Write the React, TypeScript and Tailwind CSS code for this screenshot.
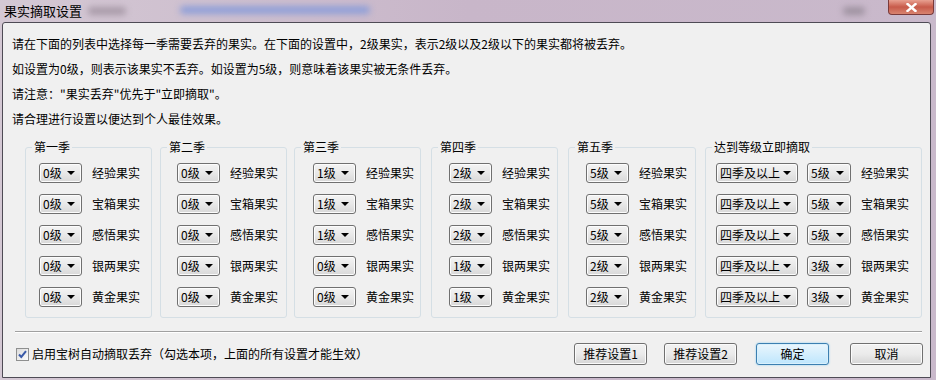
const labels = ['经验果实', '宝箱果实', '感悟果实', '银两果实', '黄金果实'];

const seasons = [
    { title: '第一季', box: 'ml-[22px] w-[127px]', pad: 'pl-[13px]', levels: ['0', '0', '0', '0', '0'] },
    { title: '第二季', box: 'ml-[8px] w-[127px]', pad: 'pl-[16px]', levels: ['0', '0', '0', '0', '0'] },
    { title: '第三季', box: 'ml-[7px] w-[127px]', pad: 'pl-[18px]', levels: ['1', '1', '1', '0', '0'] },
    { title: '第四季', box: 'ml-[10px] w-[127px]', pad: 'pl-[17px]', levels: ['2', '2', '2', '1', '1'] },
    { title: '第五季', box: 'ml-[10px] w-[128px]', pad: 'pl-[17px]', levels: ['5', '5', '5', '2', '2'] },
];

const pickLevels = ['5', '5', '5', '3', '3'];

const font = "font-['SimSun','Noto_Sans_CJK_SC',sans-serif]";

function Arrow() {
    return (
        <svg width="8" height="4" viewBox="0 0 8 4" className="shrink-0">
            <path d="M0 0h8L4 4z" fill="#000" />
        </svg>
    );
}

function Combo({ value, width }: { value: string; width: string }) {
    return (
        <div
            className={`${width} h-[20px] flex items-center justify-between pl-[3px] pr-[6px] border border-[#707070] rounded-[3px] bg-gradient-to-b from-[#f4f4f4] via-[#e8e8e8] to-[#d8d8d8] shadow-[inset_0_0_0_1px_#fcfcfc] text-[12px] leading-none text-black`}
        >
            <span>{value}</span>
            <Arrow />
        </div>
    );
}

function Group({ title, box, pad, children }: { title: string; box: string; pad: string; children: React.ReactNode }) {
    return (
        <fieldset className={`${box} h-[178px] border border-[#d5dfe5] rounded-[3px] pt-[9px]`}>
            <legend className="ml-[6px] px-[2px] text-[12px] leading-[14px]">{title}</legend>
            <div className={`${pad} flex flex-col gap-[11px]`}>{children}</div>
        </fieldset>
    );
}

function Button({ label, primary }: { label: string; primary?: boolean }) {
    return (
        <button
            className={`h-[22px] w-[73px] rounded-[3px] border text-[12px] leading-none text-black ${primary
                ? 'border-[#3c7fb1] bg-gradient-to-b from-[#eaf6fd] to-[#bee6fd] shadow-[inset_0_0_0_1px_#d9f0fc,0_0_2px_#7fc8ef]'
                : 'border-[#707070] bg-gradient-to-b from-[#f2f2f2] via-[#ebebeb] to-[#d5d5d5] shadow-[inset_0_0_0_1px_#fbfbfb]'
                }`}
        >
            {label}
        </button>
    );
}

export default function App() {
    return (
        <div className={`w-[936px] h-[380px] overflow-hidden flex flex-col bg-gradient-to-r from-[#d4c8d4] via-[#c8b6c9] to-[#c9b9cb] text-black ${font}`}>
            {/* title bar */}
            <div className="relative h-[22px] shrink-0 flex items-center pl-[4px] text-[13px]">
                <span>果实摘取设置</span>
                <div className="absolute left-[88px] top-[7px] w-[38px] h-[8px] rounded-full bg-[#a89aa8] blur-[3px]" />
                <div className="absolute left-[180px] top-[6px] w-[190px] h-[8px] rounded-full bg-[#8f9fd8] blur-[3px]" />
                <div className="absolute left-[843px] top-[7px] w-[22px] h-[8px] rounded-full bg-[#9d919f] blur-[3px]" />
                <div className="absolute right-[2px] top-0 w-[46px] h-[15px] rounded-b-[4px] border border-t-0 border-[#7a3a3a] bg-gradient-to-b from-[#e8a091] via-[#c75a4a] to-[#d8836f] flex items-center justify-center">
                    <svg width="11" height="9" viewBox="0 0 11 9">
                        <path d="M1.5 1l8 7M9.5 1l-8 7" stroke="#fff" strokeWidth="2.4" strokeLinecap="square" />
                    </svg>
                </div>
            </div>

            {/* dialog body */}
            <div className="ml-[2px] w-[929px] h-[356px] border border-[#4e4b55] rounded-t-[3px] bg-[#f0f0f0] flex flex-col text-[12px]">
                <div className="pl-[9px] pt-[8px] leading-[25px]">
                    <p>请在下面的列表中选择每一季需要丢弃的果实。在下面的设置中，2级果实，表示2级以及2级以下的果实都将被丢弃。</p>
                    <p>如设置为0级，则表示该果实不丢弃。如设置为5级，则意味着该果实被无条件丢弃。</p>
                    <p>请注意："果实丢弃"优先于"立即摘取"。</p>
                    <p>请合理进行设置以便达到个人最佳效果。</p>
                </div>

                <div className="flex mt-[9px]">
                    {seasons.map((s) => (
                        <Group key={s.title} title={s.title} box={s.box} pad={s.pad}>
                            {labels.map((l, i) => (
                                <div key={l} className="flex items-center gap-[10px]">
                                    <Combo value={`${s.levels[i]}级`} width="w-[43px]" />
                                    <span className="leading-[20px]">{l}</span>
                                </div>
                            ))}
                        </Group>
                    ))}
                    <Group title="达到等级立即摘取" box="ml-[9px] w-[217px]" pad="pl-[10px]">
                        {labels.map((l, i) => (
                            <div key={l} className="flex items-center">
                                <Combo value="四季及以上" width="w-[82px]" />
                                <div className="ml-[9px]">
                                    <Combo value={`${pickLevels[i]}级`} width="w-[44px]" />
                                </div>
                                <span className="ml-[10px] leading-[20px]">{l}</span>
                            </div>
                        ))}
                    </Group>
                </div>

                <div className="ml-[12px] mr-[8px] mt-[13px] h-[2px] border-t border-[#a0a0a0] border-b border-b-white" />

                <div className="flex items-center mt-[10px] pl-[13px] pr-[7px]">
                    <div className="w-[13px] h-[13px] border border-[#8e8f8f] bg-gradient-to-br from-[#dcdcdc] to-[#fcfcfc] flex items-center justify-center">
                        <svg width="9" height="9" viewBox="0 0 9 9">
                            <path d="M1 4.5l2.3 2.5L8 1.2" fill="none" stroke="#3a5aa8" strokeWidth="2" />
                        </svg>
                    </div>
                    <span className="ml-[3px]">启用宝树自动摘取丢弃（勾选本项，上面的所有设置才能生效）</span>
                    <div className="ml-auto flex items-center">
                        <Button label="推荐设置1" />
                        <div className="ml-[17px]"><Button label="推荐设置2" /></div>
                        <div className="ml-[19px]"><Button label="确定" primary /></div>
                        <div className="ml-[21px]"><Button label="取消" /></div>
                    </div>
                </div>
            </div>
        </div>
    );
}
